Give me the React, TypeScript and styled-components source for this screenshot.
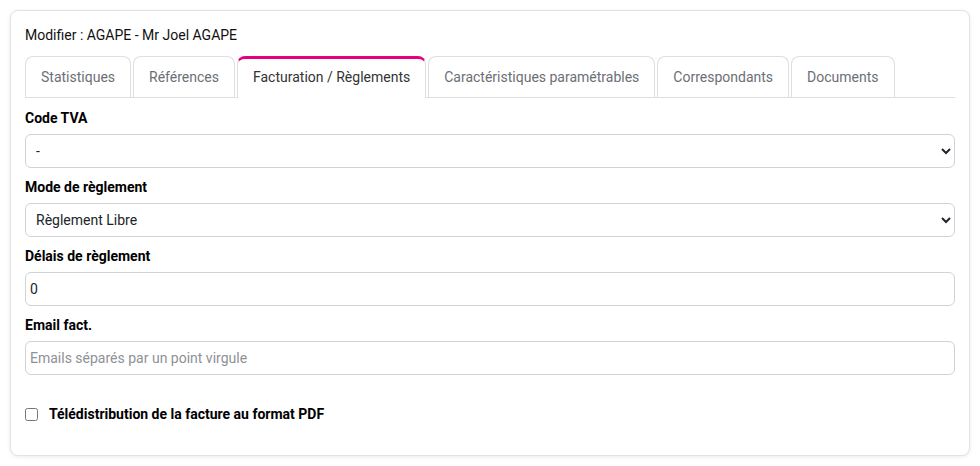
import React from "react";
import styled, { createGlobalStyle } from "styled-components";

const Global = createGlobalStyle`
  html, body { margin: 0; padding: 0; background: #fff; }
  body { font-family: Roboto, "Liberation Sans", Arial, sans-serif; font-size: 14px; color: #212529; }
  * { box-sizing: border-box; }
`;

const Page = styled.div`
  padding: 10px;
`;

const Card = styled.div`
  width: 960px;
  height: 446px;
  border: 1px solid #e2e2e2;
  border-radius: 8px;
  background: #fff;
  box-shadow: 0 1px 4px rgba(0, 0, 0, 0.08);
  padding: 14px 14px 0 14px;
`;

const Title = styled.div`
  font-size: 14px;
  line-height: 20px;
  color: #111;
  margin-bottom: 11px;
`;

const TabBar = styled.div`
  display: flex;
  align-items: flex-start;
  gap: 2px;
  border-bottom: 1px solid #dcdfe3;
  margin-bottom: 10px;
`;

const Tab = styled.div<{ $active?: boolean }>`
  height: ${(p) => (p.$active ? "42px" : "41px")};
  margin-bottom: ${(p) => (p.$active ? "-1px" : "0")};
  padding: 0 15px;
  padding-bottom: ${(p) => (p.$active ? "3px" : "0")};
  display: flex;
  align-items: center;
  border: 1px solid #dcdfe3;
  border-bottom: none;
  border-top: ${(p) => (p.$active ? "3px solid #e6007e" : "1px solid #dcdfe3")};
  border-radius: 8px 8px 0 0;
  background: #fff;
  color: ${(p) => (p.$active ? "#333" : "#6b6f75")};
  font-size: 14px;
  white-space: nowrap;
`;

const Group = styled.div`
  margin-bottom: 9px;
`;

const Label = styled.label`
  display: block;
  font-weight: 700;
  font-size: 14px;
  line-height: 20px;
  color: #000;
  margin-bottom: 6px;
`;

const Select = styled.select`
  width: 930px;
  height: 34px;
  border: 1px solid #cfd2d6;
  border-radius: 6px;
  background: #fff;
  font-family: inherit;
  font-size: 14px;
  color: #212529;
  padding: 0 6px;
  outline: none;
`;

const Input = styled.input`
  width: 930px;
  height: 34px;
  border: 1px solid #cfd2d6;
  border-radius: 6px;
  background: #fff;
  font-family: inherit;
  font-size: 14px;
  color: #212529;
  padding: 0 4px;
  outline: none;
  &::placeholder { color: #8e9196; }
`;

const CheckRow = styled.label`
  display: flex;
  align-items: center;
  gap: 11px;
  margin-top: 31px;
  font-weight: 700;
  font-size: 14px;
  color: #000;
`;

const Check = styled.input`
  width: 13px;
  height: 13px;
  margin: 0;
`;

const tabs = [
  "Statistiques",
  "Références",
  "Facturation / Règlements",
  "Caractéristiques paramétrables",
  "Correspondants",
  "Documents",
];

export default function App() {
  return (
    <Page>
      <Global />
      <Card>
        <Title>Modifier : AGAPE - Mr Joel AGAPE</Title>
        <TabBar>
          {tabs.map((t, i) => (
            <Tab key={t} $active={i === 2}>
              {t}
            </Tab>
          ))}
        </TabBar>
        <Group>
          <Label>Code TVA</Label>
          <Select defaultValue="-">
            <option value="-">-</option>
          </Select>
        </Group>
        <Group>
          <Label>Mode de règlement</Label>
          <Select defaultValue="libre">
            <option value="libre">Règlement Libre</option>
          </Select>
        </Group>
        <Group>
          <Label>Délais de règlement</Label>
          <Input defaultValue="0" />
        </Group>
        <Group>
          <Label>Email fact.</Label>
          <Input placeholder="Emails séparés par un point virgule" />
        </Group>
        <CheckRow>
          <Check type="checkbox" />
          Télédistribution de la facture au format PDF
        </CheckRow>
      </Card>
    </Page>
  );
}
